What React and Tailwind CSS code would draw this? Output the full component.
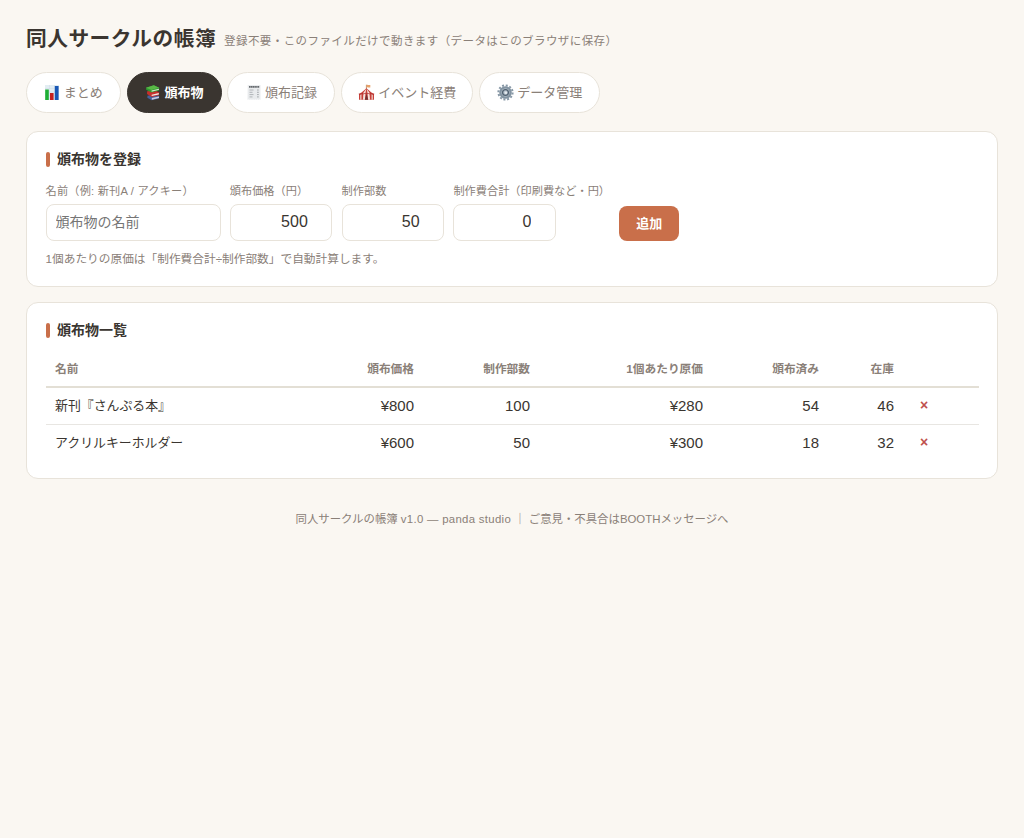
const ChartIcon = () => (
  <svg viewBox="0 0 16 17" className="h-[17px] w-4 shrink-0">
    <rect x="1" y="1" width="14" height="15" fill="#e3edf3" />
    <path d="M1 4.5h14M1 8h14M1 11.5h14M5.5 1v15M10.5 1v15" stroke="#cfdde6" strokeWidth=".5" />
    <rect x="1.2" y="5.5" width="3.6" height="10.5" fill="#1fae35" />
    <rect x="6" y="9" width="3.6" height="7" fill="#c4201f" />
    <rect x="10.8" y="2" width="3.8" height="14" fill="#1857b5" />
  </svg>
)

const BooksIcon = () => (
  <svg viewBox="0 0 16 17" className="h-[17px] w-4 shrink-0">
    <path d="M2.5 11.8l7.5-1.5 4.2 1.8-.2 2.3-7.3 1.8-4.4-2.4z" fill="#45609b" />
    <path d="M6.8 14l7.2-1.5v1.6L6.9 15.7z" fill="#c9cbe0" />
    <path d="M2.2 7.2l8-1 4 2.2-.4 2.8-7.2 1.9-4.6-3z" fill="#c62f2c" />
    <path d="M6.6 10.8l7.2-1.7v1.3l-7.1 1.7z" fill="#f2e7e2" />
    <path d="M1 3.7l7.8-2.4 5.4 2.4-.2 2.7-7.6 2L1.2 5.8z" fill="#2f9a31" />
    <path d="M1 3.7l7.8-2.4 5.4 2.4-7.8 2.2z" fill="#59b846" />
    <path d="M6.5 6.6L14 4.7v1l-7.4 2z" fill="#d5e8cd" />
  </svg>
)

const ReceiptIcon = () => (
  <svg viewBox="0 0 16 17" className="h-[17px] w-4 shrink-0">
    <path d="M1.7 1h12.8v15l-1.1-.7-1.1.7-1-.7-1.1.7-1-.7-1.1.7-1-.7-1.1.7-1.1-.7-1 .7-1.1-.7-1.3.7z" fill="#e9ebed" />
    <path d="M3 2.9h10.2" stroke="#65696d" strokeWidth="1.8" strokeDasharray="1.5 .3" />
    <path d="M3.5 6h4M3.5 8.3h3M3.5 10.6h4M3.5 12.9h3" stroke="#a2a6aa" strokeWidth=".8" />
    <path d="M11 6h1.8M11 8.3h1.8M11 10.6h1.8M11 12.9h1.8" stroke="#95999d" strokeWidth=".8" />
  </svg>
)

const TentIcon = () => (
  <svg viewBox="0 0 17 17" className="h-[17px] w-[17px] shrink-0">
    <path d="M8.4 6V.8" stroke="#9b673a" strokeWidth=".7" />
    <path d="M8.5.8c1.3-.6 2 .8 3.8.1v2.5c-1.7.6-2.5-.6-3.8 0z" fill="#e8a16a" />
    <path d="M8.5 4.2L3.5 8.5 1 9.8v6h15v-6l-2.6-1.3z" fill="#c8403a" />
    <path d="M8.2 5L5.4 8.8 5 15.8h2l.5-7zM8.8 5l2.7 3.8.5 7h-2l-.5-7z" fill="#f4e5df" />
    <path d="M2.3 10.3h1.1v5.5H2.3zM13.6 10.3h1.1v5.5h-1.1z" fill="#f4e5df" />
    <path d="M8.5 9.8l-1.7 6h3.4z" fill="#713132" />
    <path d="M.8 10c1.4.8 2.6.3 3.2-.8 1 1 2.1.8 3 0 .9.8 2 .8 3 0 1 .8 2 .9 3 0 .7 1.1 1.9 1.6 3.2.8" fill="none" stroke="#ad302f" strokeWidth=".8" />
  </svg>
)

const GearIcon = () => (
  <svg viewBox="0 0 17 17" className="h-[17px] w-[17px] shrink-0">
    <circle cx="8.5" cy="8.5" r="7.1" fill="none" stroke="#8798a6" strokeWidth="2" strokeDasharray="2 1.72" />
    <circle cx="8.5" cy="8.5" r="5.1" fill="#c2cdd5" stroke="#8293a1" strokeWidth="2.4" />
    <circle cx="8.5" cy="8.5" r="2.9" fill="#b6c2cc" stroke="#4f6070" strokeWidth="1.3" />
    <circle cx="8.9" cy="8.7" r="1.3" fill="#e3e9ed" />
  </svg>
)

const tabs = [
  { label: 'まとめ', Icon: ChartIcon, width: 'w-[95px]' },
  { label: '頒布物', Icon: BooksIcon, width: 'w-[95px]', active: true },
  { label: '頒布記録', Icon: ReceiptIcon, width: 'w-[108px]' },
  { label: 'イベント経費', Icon: TentIcon, width: 'w-[132px]' },
  { label: 'データ管理', Icon: GearIcon, width: 'w-[121.5px]' },
]

const items = [
  { name: '新刊『さんぷる本』', price: 800, made: 100, cost: 280, sold: 54, stock: 46 },
  { name: 'アクリルキーホルダー', price: 600, made: 50, cost: 300, sold: 18, stock: 32 },
]

function CardTitle({ children }) {
  return (
    <h2 className="flex h-5 items-center gap-[7.5px] text-[14px] font-bold">
      <span className="h-[15px] w-1 rounded-[2px] bg-[#c96f4a]" />
      {children}
    </h2>
  )
}

function Field({ label, value, width = 'w-[102.5px]', tracking = '', ...props }) {
  return (
    <label className="flex flex-col">
      <span className={`h-[22px] text-[11.2px] leading-[18px] whitespace-nowrap text-[#8a8078] ${tracking}`}>{label}</span>
      <input
        defaultValue={value}
        className={`${width} h-[37px] rounded-lg border border-[#e8e3da] bg-white px-[9px] placeholder:text-[#757575] ${value === undefined ? 'pb-[2px] text-[14px]' : 'pr-[23.5px] pb-[2px] text-right text-[16px]'}`}
        {...props}
      />
    </label>
  )
}

export default function App() {
  return (
    <div className="min-h-screen bg-[#faf7f2] px-[26px] pt-[25px] font-['Liberation_Sans','Noto_Sans_CJK_JP',sans-serif] text-[#3a3530]">
      <header className="flex h-7 items-baseline gap-2 whitespace-nowrap">
        <h1 className="text-[20.7px] leading-7 font-bold tracking-[0.5px]">同人サークルの帳簿</h1>
        <span className="relative -top-px text-[11.5px] tracking-[0.42px] text-[#8a8078]">
          登録不要・このファイルだけで動きます（データはこのブラウザに保存）
        </span>
      </header>

      <nav className="mt-[18.5px] flex gap-[5.7px]">
        {tabs.map(({ label, Icon, width, active }) => (
          <button
            key={label}
            className={`${width} flex h-[41px] items-center justify-center gap-[3.5px] rounded-full border text-[13px] whitespace-nowrap ${
              active ? 'border-[#3a3530] bg-[#3a3530] font-bold text-white' : 'border-[#e8e3da] bg-white text-[#8a8078]'
            }`}
          >
            <Icon />
            <span className="pt-px">{label}</span>
          </button>
        ))}
      </nav>

      <section className="mt-[18.5px] h-[156px] rounded-xl border border-[#e8e3da] bg-white px-[18.5px] pt-[17.5px]">
        <CardTitle>頒布物を登録</CardTitle>
        <div className="mt-[12.5px] flex items-end gap-[9.3px]">
          <Field label="名前（例: 新刊A / アクキー）" placeholder="頒布物の名前" width="w-[175px]" tracking="tracking-[0.2px]" />
          <Field label="頒布価格（円）" value="500" />
          <Field label="制作部数" value="50" />
          <Field label="制作費合計（印刷費など・円）" value="0" width="w-[102.5px]" />
          <button className="h-[35px] w-[60px] rounded-lg bg-[#c96f4a] text-[13px] font-bold text-white">追加</button>
        </div>
        <p className="mt-[9px] text-[11.7px] leading-[18px] text-[#8a8078]">
          1個あたりの原価は「制作費合計÷制作部数」で自動計算します。
        </p>
      </section>

      <section className="mt-[15px] h-[177px] rounded-xl border border-[#e8e3da] bg-white px-[18.5px] pt-[17px]">
        <CardTitle>頒布物一覧</CardTitle>
        <table className="mt-[11px] w-full table-fixed border-collapse">
          <colgroup>
            <col className="w-[378.5px]" />
            <col className="w-[116px]" />
            <col className="w-[173px]" />
            <col className="w-[116px]" />
            <col className="w-[75px]" />
            <col />
          </colgroup>
          <thead>
            <tr className="h-[36px] border-b-2 border-[#e3dfd5] text-right text-[11.7px] text-[#8a8078]">
              <th className="p-0">
                <div className="flex justify-between pr-[10px] pl-[9.5px]">
                  <span>名前</span>
                  <span>頒布価格</span>
                </div>
              </th>
              <th className="px-[10px] py-0">制作部数</th>
              <th className="px-[10px] py-0">1個あたり原価</th>
              <th className="px-[10px] py-0">頒布済み</th>
              <th className="px-[10px] py-0">在庫</th>
              <th />
            </tr>
          </thead>
          <tbody>
            {items.map((item) => (
              <tr key={item.name} className="h-[37px] border-b border-[#e8e6e2] text-right text-[15px] last:border-0">
                <td className="p-0">
                  <div className="flex items-center justify-between pr-[10px] pl-[9.5px]">
                    <span className="text-[12.9px]">{item.name}</span>
                    <span>¥{item.price}</span>
                  </div>
                </td>
                <td className="px-[10px] py-0">{item.made}</td>
                <td className="px-[10px] py-0">¥{item.cost}</td>
                <td className="px-[10px] py-0">{item.sold}</td>
                <td className="px-[10px] py-0">{item.stock}</td>
                <td className="py-0 pl-4 text-left">
                  <button className="block pb-px text-[14px] leading-5 font-bold text-[#c0504d]">×</button>
                </td>
              </tr>
            ))}
          </tbody>
        </table>
      </section>

      <footer className="mt-[31px] text-center text-[11.4px] leading-[18px] text-[#8a8078]">
        同人サークルの帳簿 <span className="tracking-[0.3px]">v1.0 — panda studio</span> ｜ ご意見・不具合はBOOTHメッセージへ
      </footer>
    </div>
  )
}
